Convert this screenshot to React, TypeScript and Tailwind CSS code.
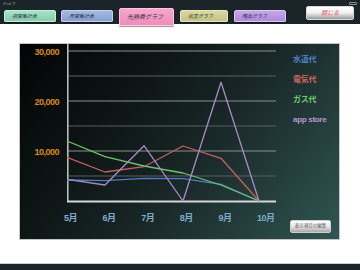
import React from 'react'

const XS = [0, 38, 77, 116, 154, 192]

const SERIES = [
  { name: '水道代', color: '#4d7cc6', text: 'text-[#4f7fc4]', ys: [136, 136.7, 134.3, 134.7, 140.3, 157] },
  { name: '電気代', color: '#c4605c', text: 'text-[#cf6560]', ys: [113.3, 128, 122.7, 102, 114.3, 157] },
  { name: 'ガス代', color: '#6cc46a', text: 'text-[#72c66a]', ys: [97, 112.7, 122, 129, 141, 157] },
  { name: 'app store', color: '#a98bc2', text: 'text-[#b896d4]', ys: [135.3, 141, 101.7, 157, 38.3, 157] },
]

const TABS = [
  { label: '週間集計表', cls: 'mt-[3px] h-[12px] w-[52px] bg-gradient-to-b from-[#a6e2c6] to-[#86cdae] border-[#c4f0dc]' },
  { label: '月間集計表', cls: 'ml-[5px] mt-[3px] h-[12px] w-[52px] bg-gradient-to-b from-[#a6b8e2] to-[#879fd2] border-[#c4d2f0]' },
  { label: '光熱費グラフ', cls: 'ml-[6px] mt-[1px] h-[18px] w-[55px] bg-gradient-to-b from-[#f6a6cc] to-[#ee8cbc] border-[#fbc8e0] text-[6px]', active: true },
  { label: '収支グラフ', cls: 'ml-[6px] mt-[3px] h-[12px] w-[48px] bg-gradient-to-b from-[#d8d8a0] to-[#c4c486] border-[#e8e8c0]' },
  { label: '残高グラフ', cls: 'ml-[6px] mt-[3px] h-[12px] w-[52px] bg-gradient-to-b from-[#c6a6e8] to-[#ae8cdc] border-[#dcc8f4]' },
]

const MONTHS = ['5月', '6月', '7月', '8月', '9月', '10月']

function Chart() {
  const line = (ys: number[]) => ys.map((y, i) => `${XS[i]},${y}`).join(' ')
  return (
    <svg width="212" height="160" viewBox="0 0 212 160" className="block overflow-visible">
      {[7, 57, 107].map(y => (
        <line key={y} x1="0" x2="209" y1={y} y2={y} stroke="#8a908e" strokeWidth="1" />
      ))}
      {[32, 82, 132].map(y => (
        <line key={y} x1="0" x2="209" y1={y} y2={y} stroke="#59615f" strokeWidth="1" />
      ))}
      <line x1="0.8" x2="0.8" y1="-1" y2="158" stroke="#b8bcbb" strokeWidth="1.6" />
      <line x1="0" x2="209" y1="157.5" y2="157.5" stroke="#d4d8d6" strokeWidth="2" />
      {SERIES.map(s => (
        <polyline key={s.name} points={line(s.ys)} fill="none" stroke={s.color} strokeWidth="1.3" strokeLinejoin="round" />
      ))}
    </svg>
  )
}

export default function App() {
  return (
    <div className="w-[360px] h-[270px] bg-white flex flex-col overflow-hidden font-['Liberation_Sans','Noto_Sans_CJK_JP',sans-serif]">
      {/* header */}
      <div className="h-[24px] shrink-0 bg-[#1b2428] relative z-10">
        <div className="h-[7px] flex justify-between items-center px-[3px] text-[4px] leading-none text-[#8a9296]">
          <span>iPad ᯤ</span>
          <span className="w-[8px] h-[3px] border border-[#8a9296] rounded-[1px]" />
        </div>
        <div className="flex items-start pl-[4px]">
          {TABS.map(t => (
            <div
              key={t.label}
              className={`${t.cls} shrink-0 border rounded-t-[2px] rounded-b-[1px] flex items-center pl-[7px] italic text-[#26343c] ${t.active ? '' : 'text-[5px]'} leading-none shadow-[0_1px_1px_rgba(0,0,0,0.4)]`}
            >
              {t.label}
            </div>
          ))}
          <div className="ml-[20px] -mt-[1px] w-[48px] h-[14px] shrink-0 rounded-[2px] border border-[#d8d8d8] bg-gradient-to-b from-white via-[#f0f0f0] to-[#9a9a9a] flex items-center justify-center text-[6px] font-bold italic text-[#ec7a8c] leading-none">
            閉じる
          </div>
        </div>
      </div>

      {/* main */}
      <div className="flex-1 relative">
        <div className="ml-[19px] mt-[19px] w-[321px] h-[197px] border border-[#c4c6c6] bg-[linear-gradient(128deg,#030505_0%,#0d1414_30%,#182626_55%,#243e3c_78%,#2f5653_100%)] flex">
          {/* y labels */}
          <div className="w-[47px] shrink-0 pt-[2px] pr-[8px] flex flex-col items-end">
            {['30,000', '20,000', '10,000'].map(v => (
              <div key={v} className="h-[50px] text-[9px] leading-[12px] font-bold tracking-[-0.5px] text-[#d8891a]">{v}</div>
            ))}
          </div>

          {/* plot */}
          <div className="w-[212px] shrink-0 flex flex-col">
            <Chart />
            <div className="flex mt-[8px] -ml-[3px]">
              {MONTHS.map(m => (
                <div key={m} className="w-[38.6px] shrink-0 text-[9px] leading-[12px] font-bold tracking-[-0.5px] text-[#7fabcc]">{m}</div>
              ))}
            </div>
          </div>

          {/* legend */}
          <div className="flex-1 flex flex-col pl-[14px] pt-[6px]">
            {SERIES.map(s => (
              <div key={s.name} className={`h-[20px] leading-[20px] text-[8px] font-bold tracking-[-0.3px] ${s.text}`}>{s.name}</div>
            ))}
            <div className="mt-auto mb-[6px] -ml-[3px] w-[41px] h-[13px] rounded-[2px] border border-[#cfcfcf] bg-gradient-to-b from-white via-[#e6e6e6] to-[#a8a8a8] flex items-center justify-center text-[4.5px] leading-none text-[#555]">
              表示項目の編集
            </div>
          </div>
        </div>
      </div>

      {/* footer */}
      <div className="h-[7px] shrink-0 bg-[#1b2529] border-t border-[#c8cccc]" />
    </div>
  )
}
